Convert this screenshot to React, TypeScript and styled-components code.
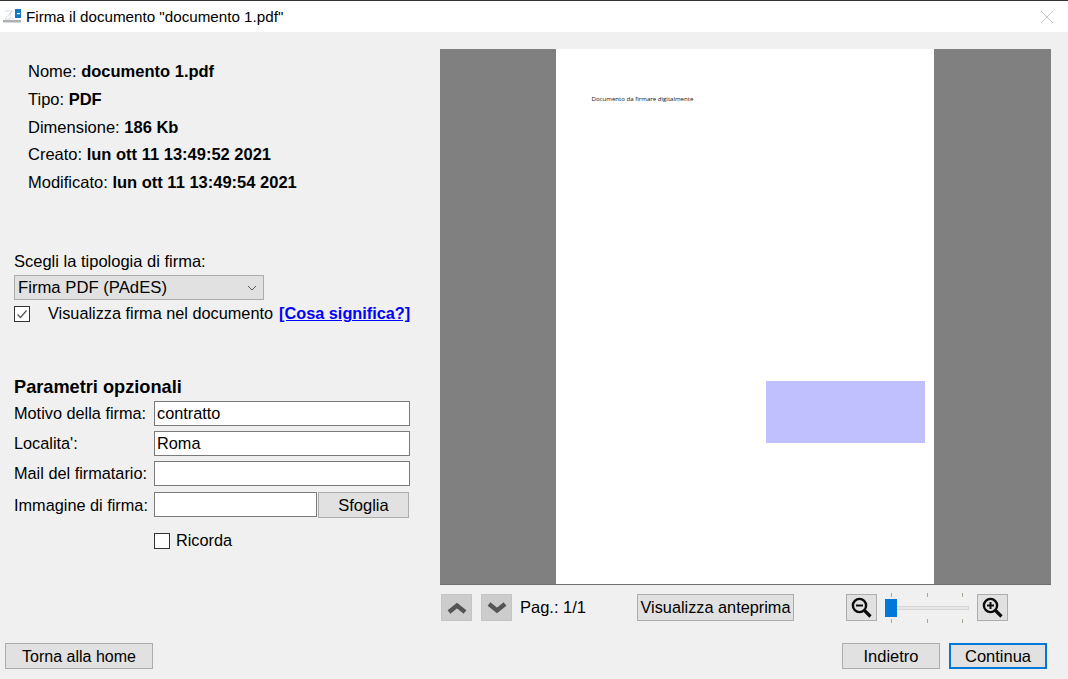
import React from 'react'
import styled, { createGlobalStyle } from 'styled-components'

const GlobalStyle = createGlobalStyle`
    html, body {
        margin: 0;
        padding: 0;
        background: #f0f0f0;
    }
    body, input, button {
        font-family: "Liberation Sans", Arial, sans-serif;
        font-size: 16.3px;
        color: #000;
    }
`

const INFO = [
    { label: 'Nome:', value: 'documento 1.pdf' },
    { label: 'Tipo:', value: 'PDF' },
    { label: 'Dimensione:', value: '186 Kb' },
    { label: 'Creato:', value: 'lun ott 11 13:49:52 2021' },
    { label: 'Modificato:', value: 'lun ott 11 13:49:54 2021' },
]

const FIELDS = [
    { label: 'Motivo della firma:', value: 'contratto' },
    { label: "Localita':", value: 'Roma' },
    { label: 'Mail del firmatario:', value: '' },
]

function AppLogo() {
    return (
        <svg width="20" height="17" viewBox="0 0 20 17">
            <path d="M3 3h7L3 11h6M12 3C9 3 8 5 8 7s1 4 4 4" fill="none" stroke="#c3cedb" strokeWidth="0.7" />
            <rect x="13" y="1" width="6" height="9" fill="#1578c2" />
            <rect x="15" y="5" width="3" height="1.2" fill="#fff" />
            <rect x="1" y="12" width="18" height="2.5" fill="#8b8f96" opacity="0.7" />
        </svg>
    )
}

function Chevron({ down }: { down?: boolean }) {
    return (
        <svg width="22" height="14" viewBox="0 0 22 14">
            <path
                d={down ? 'M3 3l8 6.5 8-6.5' : 'M3 11l8-6.5 8 6.5'}
                fill="none"
                stroke="#555"
                strokeWidth="4.4"
            />
        </svg>
    )
}

function Magnifier({ plus }: { plus?: boolean }) {
    return (
        <svg width="21" height="22" viewBox="0 0 21 22">
            <circle cx="8.5" cy="8.5" r="6.6" fill="none" stroke="#0c0c0c" strokeWidth="2.4" />
            <path d="M13.5 13.5l6 6" stroke="#0c0c0c" strokeWidth="3.2" />
            <path d={plus ? 'M5 8.5h7M8.5 5v7' : 'M5 8.5h7'} stroke="#0c0c0c" strokeWidth="2" />
        </svg>
    )
}

function CheckMark() {
    return (
        <svg width="14" height="14" viewBox="0 0 14 14">
            <path d="M2.5 7.5l3 3 6-7" fill="none" stroke="#555" strokeWidth="1.2" />
        </svg>
    )
}

export default function App(): JSX.Element {
    return (
        <Window>
            <GlobalStyle />
            <TitleBar>
                <TitleLogo>
                    <AppLogo />
                </TitleLogo>
                <TitleText>Firma il documento "documento 1.pdf"</TitleText>
                <CloseIcon viewBox="0 0 12 12">
                    <path d="M0 0l12 12M12 0L0 12" stroke="#c8c8c8" strokeWidth="1" fill="none" />
                </CloseIcon>
            </TitleBar>
            <Body>
                <LeftPanel>
                    <InfoList>
                        {INFO.map(row => (
                            <InfoRow key={row.label}>
                                {row.label} <strong>{row.value}</strong>
                            </InfoRow>
                        ))}
                    </InfoList>
                    <SignatureLabel>Scegli la tipologia di firma:</SignatureLabel>
                    <SelectBox>
                        <span>Firma PDF (PAdES)</span>
                        <svg width="10" height="6" viewBox="0 0 10 6">
                            <path d="M1 1l4 4 4-4" fill="none" stroke="#555" strokeWidth="1" />
                        </svg>
                    </SelectBox>
                    <CheckRow>
                        <CheckBox>
                            <CheckMark />
                        </CheckBox>
                        <CheckLabel>Visualizza firma nel documento</CheckLabel>
                        <HelpLink href="#">[Cosa significa?]</HelpLink>
                    </CheckRow>
                    <SectionTitle>Parametri opzionali</SectionTitle>
                    <FieldList>
                        {FIELDS.map(field => (
                            <FieldRow key={field.label}>
                                <FieldLabel>{field.label}</FieldLabel>
                                <TextInput readOnly value={field.value} />
                            </FieldRow>
                        ))}
                        <ImageRow>
                            <FieldLabel>Immagine di firma:</FieldLabel>
                            <FileInput readOnly value="" />
                            <BrowseButton>Sfoglia</BrowseButton>
                        </ImageRow>
                    </FieldList>
                    <RememberRow>
                        <CheckBox />
                        <span>Ricorda</span>
                    </RememberRow>
                </LeftPanel>
                <RightPanel>
                    <Preview>
                        <PdfPage>
                            <PdfText>Documento da firmare digitalmente</PdfText>
                            <SignatureArea />
                        </PdfPage>
                    </Preview>
                    <Controls>
                        <PageButton>
                            <Chevron />
                        </PageButton>
                        <PageButton>
                            <Chevron down />
                        </PageButton>
                        <PageLabel>Pag.: 1/1</PageLabel>
                        <PreviewButton>Visualizza anteprima</PreviewButton>
                        <ZoomButton>
                            <Magnifier />
                        </ZoomButton>
                        <Slider>
                            <Tick $at={6} $side="top" />
                            <Tick $at={42} $side="top" />
                            <Tick $at={77} $side="top" />
                            <Tick $at={6} $side="bottom" />
                            <Tick $at={42} $side="bottom" />
                            <Tick $at={77} $side="bottom" />
                            <SliderTrack />
                            <SliderThumb />
                        </Slider>
                        <ZoomButton>
                            <Magnifier plus />
                        </ZoomButton>
                    </Controls>
                </RightPanel>
            </Body>
            <Footer>
                <HomeButton>Torna alla home</HomeButton>
                <FooterActions>
                    <FooterButton>Indietro</FooterButton>
                    <FooterButton $primary>Continua</FooterButton>
                </FooterActions>
            </Footer>
        </Window>
    )
}

const Window = styled.div`
    width: 1068px;
    height: 679px;
    display: flex;
    flex-direction: column;
    overflow: hidden;
    background: #f0f0f0;
`

const TitleBar = styled.header`
    height: 31px;
    flex: none;
    display: flex;
    align-items: center;
    padding: 0 15px 0 2px;
    background: #fff;
    border-top: 1px solid #333;
`

const TitleLogo = styled.span`
    display: flex;
    width: 24px;
`

const TitleText = styled.span`
    flex: 1;
    font-size: 15.2px;
`

const CloseIcon = styled.svg`
    width: 12px;
    height: 12px;
`

const Body = styled.main`
    flex: 1;
    display: flex;
    min-height: 0;
`

const LeftPanel = styled.section`
    width: 440px;
    flex: none;
    padding: 26px 0 0 14px;
    box-sizing: border-box;
`

const InfoList = styled.div`
    padding-left: 14px;
`

const InfoRow = styled.div`
    font-size: 16.5px;
    line-height: 27.75px;
    white-space: nowrap;

    strong {
        font-weight: 700;
    }
`

const SignatureLabel = styled.div`
    margin-top: 55px;
    font-size: 16.5px;
    line-height: 19px;
`

const SelectBox = styled.div`
    width: 250px;
    height: 25px;
    margin-top: 4px;
    padding: 1px 6px 0 3px;
    box-sizing: border-box;
    display: flex;
    align-items: center;
    justify-content: space-between;
    background: #e1e1e1;
    border: 1px solid #adadad;
    font-size: 16.7px;
`

const CheckRow = styled.div`
    display: flex;
    align-items: center;
    height: 16px;
    margin-top: 6px;
    white-space: nowrap;
`

const CheckBox = styled.span`
    width: 16px;
    height: 16px;
    flex: none;
    box-sizing: border-box;
    display: flex;
    align-items: center;
    justify-content: center;
    background: #fff;
    border: 1px solid #333;
`

const CheckLabel = styled.span`
    margin-left: 18px;
`

const HelpLink = styled.a`
    margin-left: 6px;
    font-weight: 700;
    color: #0000ff;
    text-decoration: underline;
`

const SectionTitle = styled.h2`
    margin: 55px 0 0;
    font-size: 18.2px;
    line-height: 20px;
    font-weight: 700;
`

const FieldList = styled.div`
    display: flex;
    flex-direction: column;
    gap: 5px;
    margin-top: 4px;
`

const FieldRow = styled.div`
    display: flex;
    align-items: center;
    height: 25.3px;
`

const ImageRow = styled(FieldRow)`
    height: 26px;
    margin-top: 0.5px;
`

const FieldLabel = styled.label`
    width: 140px;
    flex: none;
    white-space: nowrap;
`

const TextInput = styled.input`
    width: 256px;
    height: 25px;
    padding: 0 2px;
    box-sizing: border-box;
    background: #fff;
    border: 1px solid #7a7a7a;
    border-radius: 0;
    outline: none;
`

const FileInput = styled(TextInput)`
    width: 163px;
    align-self: flex-start;
`

const Button = styled.button`
    padding: 0;
    box-sizing: border-box;
    background: #e1e1e1;
    border: 1px solid #adadad;
    border-radius: 0;
    white-space: nowrap;
`

const BrowseButton = styled(Button)`
    width: 91px;
    height: 26px;
    margin-left: 1px;
    font-size: 16.5px;
`

const RememberRow = styled.div`
    display: flex;
    align-items: center;
    gap: 6px;
    margin: 13px 0 0 140px;
`

const RightPanel = styled.section`
    width: 611px;
    flex: none;
    padding-top: 17px;
`

const Preview = styled.div`
    height: 536px;
    padding-right: 1px;
    box-sizing: border-box;
    display: flex;
    justify-content: center;
    background: #808080;
    border-bottom: 1px solid #6e6e6e;
`

const PdfPage = styled.div`
    position: relative;
    width: 378px;
    background: #fff;
`

const PdfText = styled.div`
    padding: 45px 0 0 35.5px;
    font-family: "Open Sans", sans-serif;
    font-size: 6.1px;
    line-height: 9px;
    color: #111;
`

const SignatureArea = styled.div`
    position: absolute;
    left: 210px;
    top: 332px;
    width: 159px;
    height: 62px;
    background: #c0c0ff;
`

const Controls = styled.div`
    display: flex;
    align-items: center;
    height: 27px;
    margin-top: 9px;
    padding-left: 1px;
`

const PageButton = styled(Button)`
    width: 31px;
    height: 27px;
    margin-right: 9px;
    display: flex;
    align-items: center;
    justify-content: center;
    background: #cccccc;
    border-color: #c4c4c4;

    & + span {
        margin-left: -1px;
    }
`

const PageLabel = styled.span`
    width: 117px;
    flex: none;
    white-space: nowrap;
    font-size: 16.5px;
`

const PreviewButton = styled(Button)`
    width: 157px;
    height: 27px;
    margin-right: 52px;
`

const ZoomButton = styled(Button)`
    width: 31px;
    height: 27px;
    display: flex;
    align-items: center;
    justify-content: center;
    background: #e1e1e1;
`

const Slider = styled.div`
    position: relative;
    width: 85px;
    height: 30px;
    margin: 0 7px 0 8px;
`

const Tick = styled.i<{ $at: number; $side: 'top' | 'bottom' }>`
    position: absolute;
    left: ${props => props.$at}px;
    ${props => props.$side}: 0;
    width: 1px;
    height: 4px;
    background: #a9a594;
`

const SliderTrack = styled.div`
    position: absolute;
    left: 0;
    right: 1px;
    top: 13px;
    height: 4px;
    background: #e7e7e7;
    border: 1px solid #d6d6d6;
    box-sizing: border-box;
`

const SliderThumb = styled.div`
    position: absolute;
    left: 0;
    top: 6px;
    width: 12px;
    height: 18px;
    background: #0078d7;
`

const Footer = styled.footer`
    height: 36px;
    flex: none;
    display: flex;
    align-items: flex-start;
    justify-content: space-between;
    padding: 0 21px 0 5px;
`

const HomeButton = styled(Button)`
    width: 148px;
    height: 26px;
    padding-top: 2px;
    font-size: 16px;
`

const FooterActions = styled.div`
    display: flex;
    gap: 9px;
`

const FooterButton = styled(Button)<{ $primary?: boolean }>`
    width: 98px;
    height: 26px;
    font-size: 16.5px;
    border: ${props => (props.$primary ? '2px solid #0078d7' : '1px solid #adadad')};
`
